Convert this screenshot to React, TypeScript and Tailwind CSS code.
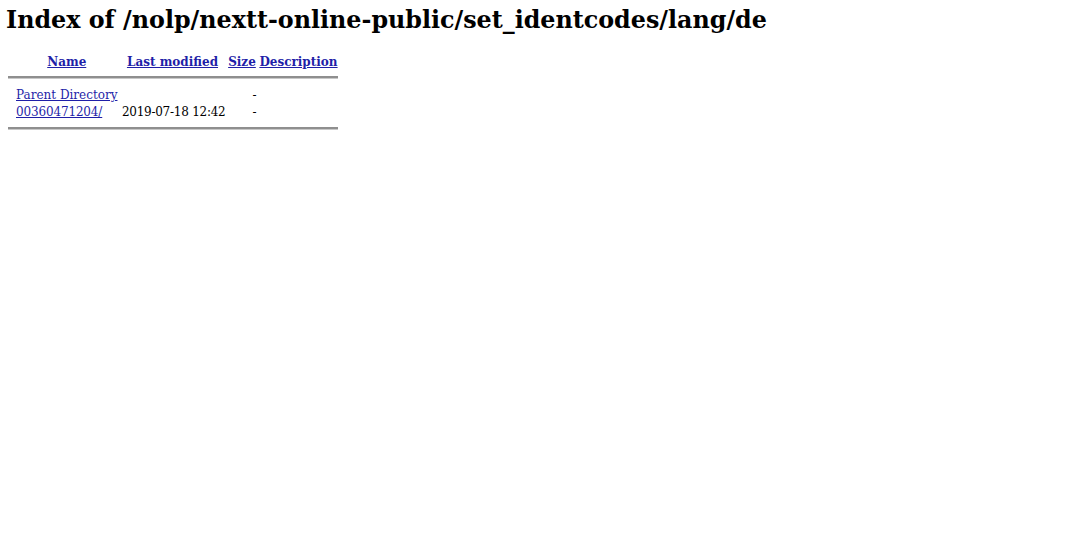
import React from "react";

const rows = [
  { name: "Parent Directory", modified: "", size: "-", description: "" },
  { name: "00360471204/", modified: "2019-07-18 12:42", size: "-", description: "" },
];

function Rule({ top, bottom }: { top: string; bottom: string }) {
  return (
    <tr>
      <th colSpan={5} className={`p-0 ${top} ${bottom}`}>
        <div className="h-[2px] w-full bg-[#8f8f8f] border-b border-[#c8c8c8] box-content" />
      </th>
    </tr>
  );
}

const link = "text-[#1f1fa8] underline";

export default function App() {
  return (
    <div className="min-h-screen bg-white text-black font-['DejaVu_Serif',serif] pl-[6px] pt-[6px]">
      <h1 className="pl-0 text-[23.8px] leading-[28px] font-bold">
        Index of /nolp/nextt-online-public/set_identcodes/lang/de
      </h1>
      <table className="mt-[19px] border-separate border-spacing-[2px] text-[12px] leading-[15px]">
        <thead>
          <tr>
            <th className="w-[6px] p-0" />
            <th className="w-[101px] p-0 font-bold text-center">
              <a href="#" className={link}>Name</a>
            </th>
            <th className="w-[106px] p-0 font-bold text-center">
              <a href="#" className={link}>Last modified</a>
            </th>
            <th className="w-[29px] p-0 font-bold text-center">
              <a href="#" className={link}>Size</a>
            </th>
            <th className="w-[80px] p-0 font-bold text-center">
              <a href="#" className={link}>Description</a>
            </th>
          </tr>
          <Rule top="pt-[4px]" bottom="pb-[7px]" />
        </thead>
        <tbody>
          {rows.map((r) => (
            <tr key={r.name}>
              <td className="p-0" />
              <td className="p-0 whitespace-nowrap">
                <a
                  href="#"
                  className={`${link} ${r.name === "Parent Directory" ? "" : "tracking-[-0.15px]"}`}
                >
                  {r.name}
                </a>
              </td>
              <td className="p-0 text-right tracking-[-0.25px] whitespace-nowrap">{r.modified}</td>
              <td className="p-0 text-right">{r.size}</td>
              <td className="p-0">{r.description}</td>
            </tr>
          ))}
          <Rule top="pt-[5px]" bottom="pb-[3px]" />
        </tbody>
      </table>
    </div>
  );
}
